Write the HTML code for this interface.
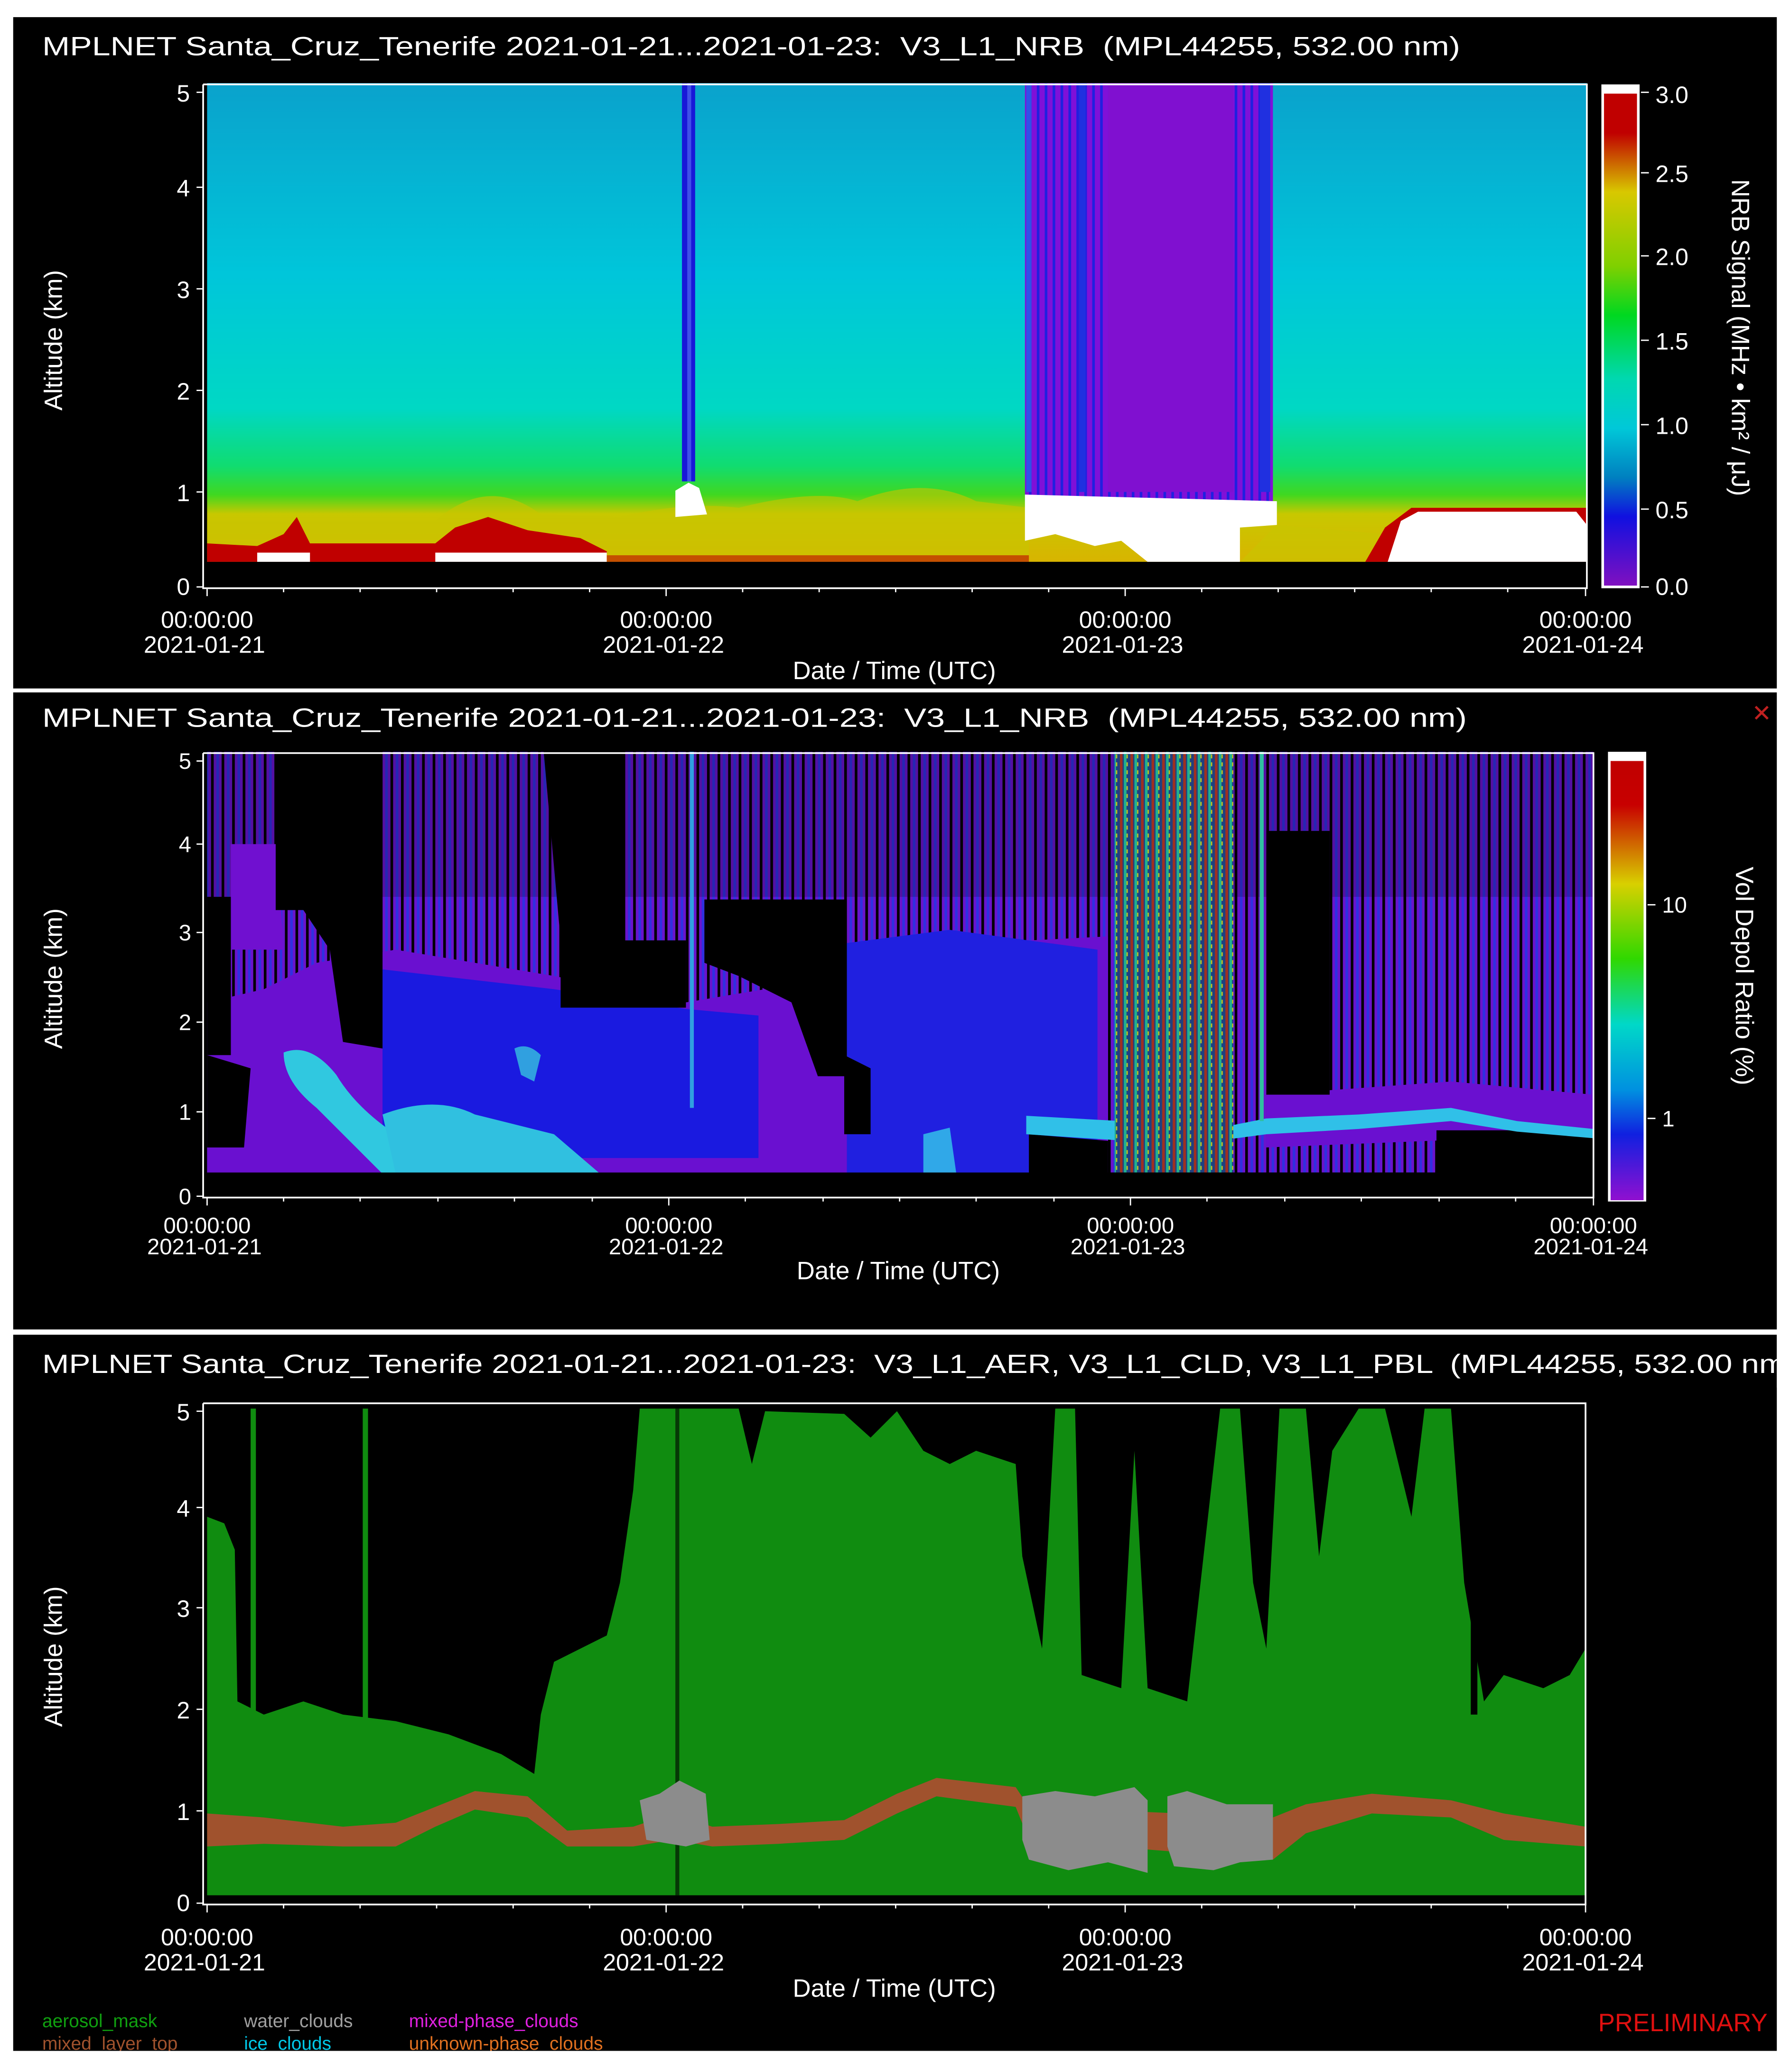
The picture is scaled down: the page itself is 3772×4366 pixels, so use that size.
<!DOCTYPE html>
<html><head><meta charset="utf-8"><style>
html,body{margin:0;padding:0;background:#fff;width:3772px;height:4366px;overflow:hidden}
svg{display:block}
text{font-family:"Liberation Sans",sans-serif;fill:#fff}
</style></head><body>
<svg width="3772" height="4366" viewBox="0 0 1357 1571" preserveAspectRatio="none" xmlns="http://www.w3.org/2000/svg">
<defs>
<linearGradient id="g1" x1="0" y1="0" x2="0" y2="1">
<stop offset="0" stop-color="#0aa2cc"/><stop offset="0.4" stop-color="#00c6da"/><stop offset="0.68" stop-color="#00d8c4"/>
<stop offset="0.8" stop-color="#10dc70"/><stop offset="0.86" stop-color="#40d820"/><stop offset="0.9" stop-color="#c8c800"/>
<stop offset="1" stop-color="#d8b400"/>
</linearGradient>
<linearGradient id="cb1" x1="0" y1="0" x2="0" y2="1">
<stop offset="0" stop-color="#c00000"/><stop offset="0.08" stop-color="#c00000"/><stop offset="0.2" stop-color="#d8c800"/>
<stop offset="0.35" stop-color="#80d000"/><stop offset="0.45" stop-color="#00d820"/><stop offset="0.58" stop-color="#00d8b0"/>
<stop offset="0.68" stop-color="#00c8d8"/><stop offset="0.78" stop-color="#0080c0"/><stop offset="0.86" stop-color="#1010e0"/>
<stop offset="1" stop-color="#8010c0"/>
</linearGradient>
<linearGradient id="cb2" x1="0" y1="0" x2="0" y2="1">
<stop offset="0" stop-color="#c00000"/><stop offset="0.1" stop-color="#c80000"/><stop offset="0.28" stop-color="#d8d000"/>
<stop offset="0.45" stop-color="#30d800"/><stop offset="0.6" stop-color="#00d8c8"/><stop offset="0.75" stop-color="#0090e0"/>
<stop offset="0.85" stop-color="#1020e0"/><stop offset="1" stop-color="#9010d0"/>
</linearGradient>
<pattern id="stripes" width="6" height="10" patternUnits="userSpaceOnUse">
<rect width="6" height="10" fill="#8010d8"/><rect x="0" width="2" height="10" fill="#2020e0"/>
</pattern>
<pattern id="dep" width="8" height="6" patternUnits="userSpaceOnUse">
<rect width="8" height="6" fill="#204080"/><rect x="1" width="2" height="6" fill="#a03020"/><rect x="4" width="2" height="6" fill="#20b090"/><rect x="6" y="2" width="1" height="3" fill="#c0c020"/>
</pattern>
<pattern id="speck" width="8" height="6" patternUnits="userSpaceOnUse">
<rect width="8" height="6" fill="#6a14cc"/><rect x="0" width="2" height="6" fill="#000"/><rect x="4" y="0" width="2" height="6" fill="#3030e0"/>
</pattern>
</defs>

<rect x="10" y="13" width="1337" height="509" fill="#000"/>
<rect x="10" y="525" width="1337" height="483" fill="#000"/>
<rect x="10" y="1012" width="1337" height="543" fill="#000"/>

<!-- ===== PANEL 1 ===== -->
<text x="32" y="42" font-size="20" textLength="1075" lengthAdjust="spacingAndGlyphs" xml:space="preserve">MPLNET Santa_Cruz_Tenerife 2021-01-21...2021-01-23:  V3_L1_NRB  (MPL44255, 532.00 nm)</text>
<rect x="157" y="63" width="1046" height="363" fill="url(#g1)"/>
<path d="M157 395 L330 395 Q370 360 410 390 L470 392 Q520 380 560 385 Q620 370 650 380 Q700 360 740 380 L780 385 L780 426 L157 426Z" fill="#c8c400" opacity="0.6"/>
<path d="M157 412 L195 414 L215 405 L225 392 L235 412 L330 412 L345 400 L370 392 L400 402 L440 408 L460 418 L460 426 L157 426Z" fill="#c00000"/>
<rect x="195" y="419" width="40" height="7" fill="#fff"/>
<rect x="330" y="419" width="130" height="7" fill="#fff"/>
<rect x="460" y="421" width="320" height="5" fill="#c02000" opacity="0.7"/>
<rect x="517" y="63" width="10" height="302" fill="#1818d8"/>
<rect x="521" y="63" width="3" height="302" fill="#4050e8"/>
<path d="M512 372 L522 366 L530 370 L536 390 L512 392Z" fill="#fff"/>
<rect x="777" y="63" width="188" height="317" fill="url(#stripes)"/>
<rect x="840" y="63" width="95" height="310" fill="#8010d0"/>
<rect x="778" y="63" width="4" height="310" fill="#3050e8"/>
<rect x="818" y="63" width="5" height="310" fill="#2030e0"/>
<rect x="955" y="63" width="8" height="310" fill="#2030e0"/>
<path d="M777 375 L968 380 L968 398 L940 400 L940 426 L870 426 L850 410 L830 414 L800 405 L777 410Z" fill="#fff"/>
<path d="M968 398 L1050 405 L1050 426 L940 426Z" fill="#c8c400" opacity="0.6"/>
<path d="M1035 426 L1050 400 L1070 385 L1203 385 L1203 426Z" fill="#c00000"/>
<path d="M1052 426 L1062 395 L1075 388 L1195 388 L1203 398 L1203 426Z" fill="#fff"/>
<rect x="157" y="426" width="1046" height="20" fill="#000"/>
<path d="M154 64 L154 446 L1203 446 L1203 64 L154 64" stroke="#fff" stroke-width="1.3" fill="none"/>
<g stroke="#fff" stroke-width="1">
<path d="M149 70 H154 M149 142 H154 M149 219 H154 M149 296 H154 M149 373 H154 M149 445 H154"/>
<path d="M157 446 V452 M505 446 V452 M853 446 V452 M1202 446 V452 M215 446 V449 M273 446 V449 M331 446 V449 M389 446 V449 M447 446 V449 M563 446 V449 M621 446 V449 M679 446 V449 M737 446 V449 M795 446 V449 M911 446 V449 M969 446 V449 M1027 446 V449 M1085 446 V449 M1143 446 V449"/>
</g>
<g font-size="18" text-anchor="end">
<text x="144" y="77">5</text><text x="144" y="149">4</text><text x="144" y="226">3</text><text x="144" y="303">2</text><text x="144" y="380">1</text><text x="144" y="451">0</text>
</g>
<text transform="translate(47,258) rotate(-90)" font-size="19" text-anchor="middle">Altitude (km)</text>
<g font-size="18" text-anchor="middle">
<text x="157" y="476">00:00:00</text><text x="155" y="495">2021-01-21</text>
<text x="505" y="476">00:00:00</text><text x="503" y="495">2021-01-22</text>
<text x="853" y="476">00:00:00</text><text x="851" y="495">2021-01-23</text>
<text x="1202" y="476">00:00:00</text><text x="1200" y="495">2021-01-24</text>
</g>
<text x="678" y="515" font-size="19" text-anchor="middle">Date / Time (UTC)</text>
<rect x="1214" y="64" width="29" height="382" fill="#fff"/>
<rect x="1216" y="71" width="25" height="373" fill="url(#cb1)"/>
<path d="M1244 70 H1250 M1244 131 H1250 M1244 194 H1250 M1244 258 H1250 M1244 322 H1250 M1244 386 H1250 M1244 445 H1250" stroke="#fff"/>
<g font-size="18"><text x="1255" y="78">3.0</text><text x="1255" y="138">2.5</text><text x="1255" y="201">2.0</text><text x="1255" y="265">1.5</text><text x="1255" y="329">1.0</text><text x="1255" y="393">0.5</text><text x="1255" y="451">0.0</text></g>
<text transform="translate(1313,256) rotate(90)" font-size="19" text-anchor="middle">NRB Signal (MHz • km² / μJ)</text>

<!-- ===== PANEL 2 ===== -->
<text x="32" y="551" font-size="20" textLength="1080" lengthAdjust="spacingAndGlyphs" xml:space="preserve">MPLNET Santa_Cruz_Tenerife 2021-01-21...2021-01-23:  V3_L1_NRB  (MPL44255, 532.00 nm)</text>
<text x="1328" y="547" font-size="18" style="fill:#c02020">✕</text>
<rect x="157" y="570" width="1051" height="319" fill="url(#speck)"/>
<rect x="157" y="570" width="1051" height="110" fill="#000" opacity="0.2"/>
<path d="M157 760 L200 750 L240 730 L300 720 L420 740 L520 760 L580 750 L640 720 L840 710 L840 890 L157 890Z" fill="#6a10d0"/>
<path d="M960 830 L1100 820 L1208 830 L1208 860 L960 870Z" fill="#6a10d0"/>
<path d="M290 735 L420 750 L520 765 L575 770 L575 878 L290 878Z" fill="#1a1ae0"/>
<path d="M642 715 L720 705 L832 720 L832 890 L642 890Z" fill="#2020e0"/>
<path d="M175 640 L210 640 L215 720 L175 720Z" fill="#7010d0"/>
<g fill="#000">
<path d="M209 568 L290 568 L290 795 L260 790 L250 720 L230 690 L209 690Z"/>
<path d="M157 680 L175 680 L175 800 L157 800Z"/>
<path d="M412 568 L473 568 L473 713 L520 713 L520 764 L425 764 L425 713Z"/>
<path d="M534 682 L642 682 L642 816 L620 816 L600 760 L560 740 L534 730Z"/>
<path d="M960 630 L1008 630 L1008 830 L960 830Z"/>
<path d="M1089 857 L1208 857 L1208 890 L1089 890Z"/>
<path d="M157 800 L190 810 L185 870 L157 870Z"/>
<path d="M640 800 L660 810 L660 860 L640 860Z"/>
<path d="M780 860 L840 865 L840 890 L780 890Z"/>
</g>
<path d="M215 798 Q235 790 255 815 Q270 840 300 860 L325 890 L290 890 Q260 860 240 840 Q215 820 215 798Z" fill="#30c8e0"/>
<path d="M290 845 Q330 830 360 845 L420 860 L455 890 L300 890Z" fill="#30c0e0"/>
<path d="M390 795 Q400 790 410 800 L405 820 L395 815Z" fill="#30a0e0"/>
<path d="M778 846 L850 850 L900 860 L960 848 L1030 845 L1100 840 L1150 850 L1208 856 L1208 863 L1150 858 L1100 850 L1030 856 L960 860 L900 868 L778 860Z" fill="#30c0e8"/>
<path d="M700 860 L720 855 L725 890 L700 890Z" fill="#30a8e8"/>
<rect x="845" y="570" width="90" height="319" fill="url(#dep)"/>
<rect x="523" y="570" width="3" height="270" fill="#30a0e0"/>
<rect x="955" y="570" width="3" height="280" fill="#30c0a0"/>
<rect x="157" y="889" width="1051" height="19" fill="#000"/>
<path d="M154 571 L154 908 L1208 908 L1208 571 L154 571" stroke="#fff" stroke-width="1.3" fill="none"/>
<g stroke="#fff" stroke-width="1">
<path d="M149 577 H154 M149 640 H154 M149 707 H154 M149 775 H154 M149 843 H154 M149 907 H154"/>
<path d="M157 908 V914 M507 908 V914 M857 908 V914 M1208 908 V914 M215 908 V911 M273 908 V911 M332 908 V911 M390 908 V911 M449 908 V911 M565 908 V911 M624 908 V911 M682 908 V911 M740 908 V911 M799 908 V911 M915 908 V911 M974 908 V911 M1032 908 V911 M1091 908 V911 M1149 908 V911"/>
</g>
<g font-size="17" text-anchor="end">
<text x="145" y="583">5</text><text x="145" y="646">4</text><text x="145" y="713">3</text><text x="145" y="781">2</text><text x="145" y="849">1</text><text x="145" y="913">0</text>
</g>
<text transform="translate(47,742) rotate(-90)" font-size="19" text-anchor="middle">Altitude (km)</text>
<g font-size="17" text-anchor="middle">
<text x="157" y="935">00:00:00</text><text x="155" y="951">2021-01-21</text>
<text x="507" y="935">00:00:00</text><text x="505" y="951">2021-01-22</text>
<text x="857" y="935">00:00:00</text><text x="855" y="951">2021-01-23</text>
<text x="1208" y="935">00:00:00</text><text x="1206" y="951">2021-01-24</text>
</g>
<text x="681" y="970" font-size="19" text-anchor="middle">Date / Time (UTC)</text>
<rect x="1219" y="570" width="29" height="341" fill="#fff"/>
<rect x="1221" y="577" width="25" height="333" fill="url(#cb2)"/>
<path d="M1249 686 H1255 M1249 848 H1255" stroke="#fff"/>
<g font-size="17"><text x="1260" y="692">10</text><text x="1260" y="854">1</text></g>
<text transform="translate(1316,740) rotate(90)" font-size="19" text-anchor="middle">Vol Depol Ratio (%)</text>

<!-- ===== PANEL 3 ===== -->
<text x="32" y="1041" font-size="20" textLength="1330" lengthAdjust="spacingAndGlyphs" xml:space="preserve">MPLNET Santa_Cruz_Tenerife 2021-01-21...2021-01-23:  V3_L1_AER, V3_L1_CLD, V3_L1_PBL  (MPL44255, 532.00 nm)</text>
<rect x="1347" y="1012" width="10" height="40" fill="#fff"/>
<path fill="#108c10" d="M157 1437 L157 1150 L170 1155 L178 1175 L180 1290 L200 1300 L230 1290 L260 1300 L300 1305 L340 1315 L380 1330 L405 1345 L410 1300 L420 1260 L440 1250 L460 1240 L470 1200 L480 1130 L485 1068 L560 1068 L570 1110 L580 1070 L640 1072 L660 1090 L680 1070 L700 1100 L720 1110 L740 1100 L770 1110 L775 1180 L790 1250 L800 1068 L815 1068 L820 1270 L850 1280 L860 1100 L870 1280 L900 1290 L925 1068 L940 1068 L950 1200 L960 1250 L970 1068 L990 1068 L1000 1180 L1010 1100 L1030 1068 L1050 1068 L1070 1150 L1080 1068 L1100 1068 L1110 1200 L1125 1290 L1140 1270 L1170 1280 L1190 1270 L1202 1250 L1202 1437Z"/>
<g fill="#000">
<rect x="830" y="1068" width="8" height="200"/>
<rect x="880" y="1068" width="14" height="190"/>
<rect x="1115" y="1200" width="5" height="100"/>
</g>
<g fill="#108c10">
<rect x="190" y="1068" width="4" height="240"/>
<rect x="275" y="1068" width="4" height="240"/>
</g>
<rect x="512" y="1068" width="3" height="369" fill="#063806"/>
<path fill="#a0522d" d="M157 1375 L200 1378 L260 1385 L300 1382 L330 1370 L360 1358 L400 1362 L430 1388 L480 1385 L510 1375 L540 1385 L590 1383 L640 1380 L680 1360 L710 1348 L770 1355 L780 1370 L965 1378 L990 1368 L1040 1360 L1100 1365 L1140 1375 L1202 1385 L1202 1400 L1140 1395 L1100 1378 L1040 1375 L990 1390 L965 1410 L780 1395 L770 1370 L710 1362 L680 1375 L640 1395 L590 1398 L540 1400 L510 1395 L480 1400 L430 1400 L400 1378 L360 1372 L330 1385 L300 1400 L260 1400 L200 1398 L157 1400Z"/>
<path fill="#8c8c8c" d="M775 1362 L800 1358 L830 1362 L860 1355 L870 1365 L870 1420 L840 1412 L810 1418 L780 1410 L775 1395Z"/>
<path fill="#8c8c8c" d="M885 1362 L900 1358 L930 1368 L965 1368 L965 1410 L940 1412 L920 1418 L890 1415 L885 1400Z"/>
<path fill="#8c8c8c" d="M485 1365 L500 1360 L515 1350 L535 1360 L538 1395 L520 1400 L490 1395Z"/>
<path d="M154 1064 L154 1444 L1202 1444 L1202 1064 L154 1064" stroke="#fff" stroke-width="1.3" fill="none"/>
<g stroke="#fff" stroke-width="1">
<path d="M149 1070 H154 M149 1143 H154 M149 1219 H154 M149 1296 H154 M149 1373 H154 M149 1443 H154"/>
<path d="M157 1444 V1450 M505 1444 V1450 M853 1444 V1450 M1202 1444 V1450 M215 1444 V1447 M273 1444 V1447 M331 1444 V1447 M389 1444 V1447 M447 1444 V1447 M563 1444 V1447 M621 1444 V1447 M679 1444 V1447 M737 1444 V1447 M795 1444 V1447 M911 1444 V1447 M969 1444 V1447 M1027 1444 V1447 M1085 1444 V1447 M1143 1444 V1447"/>
</g>
<g font-size="18" text-anchor="end">
<text x="144" y="1077">5</text><text x="144" y="1150">4</text><text x="144" y="1226">3</text><text x="144" y="1303">2</text><text x="144" y="1380">1</text><text x="144" y="1449">0</text>
</g>
<text transform="translate(47,1256) rotate(-90)" font-size="19" text-anchor="middle">Altitude (km)</text>
<g font-size="18" text-anchor="middle">
<text x="157" y="1475">00:00:00</text><text x="155" y="1494">2021-01-21</text>
<text x="505" y="1475">00:00:00</text><text x="503" y="1494">2021-01-22</text>
<text x="853" y="1475">00:00:00</text><text x="851" y="1494">2021-01-23</text>
<text x="1202" y="1475">00:00:00</text><text x="1200" y="1494">2021-01-24</text>
</g>
<text x="678" y="1514" font-size="19" text-anchor="middle">Date / Time (UTC)</text>
<g font-size="14">
<text x="32" y="1537" style="fill:#10a010">aerosol_mask</text>
<text x="185" y="1537" style="fill:#a0a0a0">water_clouds</text>
<text x="310" y="1537" style="fill:#e020e0">mixed-phase_clouds</text>
<text x="32" y="1554" style="fill:#a0522d">mixed_layer_top</text>
<text x="185" y="1554" style="fill:#00c8e8">ice_clouds</text>
<text x="310" y="1554" style="fill:#e07020">unknown-phase_clouds</text>
</g>
<text x="1340" y="1540" font-size="19" text-anchor="end" style="fill:#e01010">PRELIMINARY</text>
<rect x="0" y="1555" width="1357" height="16" fill="#fff"/>
</svg>
</body></html>
